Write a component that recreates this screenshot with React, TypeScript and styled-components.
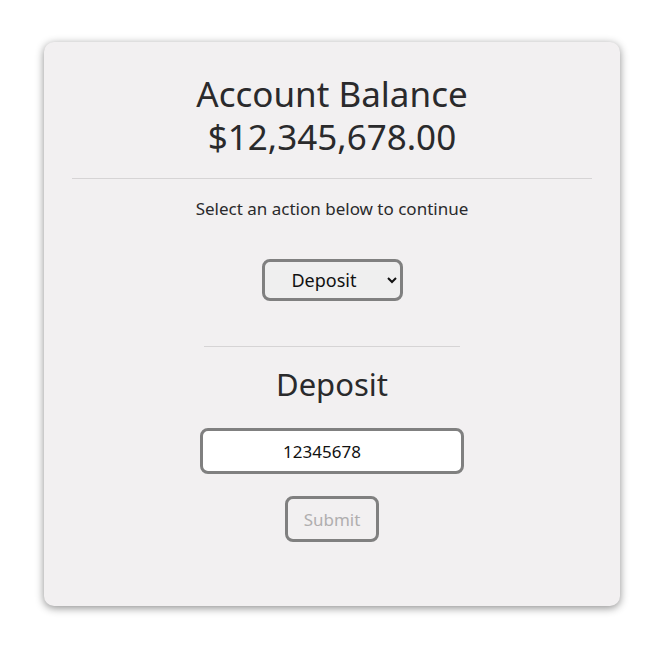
import React, { useState } from "react";
import styled, { createGlobalStyle } from "styled-components";

const Global = createGlobalStyle`
  html, body { margin: 0; padding: 0; background: #ffffff; }
  body { font-family: "Noto Sans", "Open Sans", sans-serif; color: #2a2a2c; }
  * { box-sizing: border-box; }
`;

const Page = styled.div`
  padding: 42px 1px 42px 0;
  display: flex;
  justify-content: center;
`;

const Card = styled.main`
  width: 576px;
  min-height: 564px;
  background: #f2f0f1;
  border-radius: 10px;
  box-shadow: 0 2px 8px rgba(0, 0, 0, 0.45);
  padding: 30px 28px 40px;
  display: flex;
  flex-direction: column;
  align-items: center;
`;

const Title = styled.h1`
  margin: 0;
  font-size: 35px;
  font-weight: 400;
  line-height: 43px;
  text-align: center;
`;

const Rule = styled.hr<{ $width?: number }>`
  border: none;
  border-top: 1px solid #d6d4d5;
  width: ${(p) => (p.$width ? `${p.$width}px` : "100%")};
  margin: ${(p) => (p.$width ? "45px 0 15px" : "20px 0 18px")};
`;

const Prompt = styled.p`
  margin: 0;
  font-size: 17px;
  line-height: 24px;
  text-align: center;
`;

const Select = styled.select`
  margin-top: 38px;
  width: 141px;
  height: 42px;
  border: 3px solid #808080;
  border-radius: 8px;
  background: #efefef;
  font-family: "Noto Sans", sans-serif;
  font-size: 18px;
  color: #111;
  text-align: center;
  padding: 0 4px 0 0;
`;

const SubTitle = styled.h2`
  margin: 0;
  font-size: 31px;
  font-weight: 400;
  line-height: 44px;
  text-align: center;
`;

const Form = styled.form`
  display: flex;
  flex-direction: column;
  align-items: center;
  gap: 22px;
  margin-top: 22px;
`;

const AmountInput = styled.input`
  width: 264px;
  height: 46px;
  border: 3px solid #808080;
  border-radius: 8px;
  background: #ffffff;
  font-family: "Noto Sans", sans-serif;
  font-size: 17px;
  color: #111;
  text-align: center;
  padding: 0 20px 0 0;
  outline: none;
`;

const SubmitButton = styled.button`
  width: 94px;
  height: 46px;
  border: 3px solid #808080;
  border-radius: 8px;
  background: transparent;
  font-family: "Noto Sans", sans-serif;
  font-size: 17px;
  color: #b0aeaf;
`;

export default function App() {
  const [action, setAction] = useState("deposit");
  const [amount, setAmount] = useState("12345678");
  return (
    <>
      <Global />
      <Page>
        <Card>
          <Title>
            Account Balance
            <br />
            $12,345,678.00
          </Title>
          <Rule />
          <Prompt>Select an action below to continue</Prompt>
          <Select value={action} onChange={(e) => setAction(e.target.value)}>
            <option value="deposit">Deposit</option>
            <option value="withdraw">Withdraw</option>
          </Select>
          <Rule $width={256} />
          <SubTitle>Deposit</SubTitle>
          <Form onSubmit={(e) => e.preventDefault()}>
            <AmountInput value={amount} onChange={(e) => setAmount(e.target.value)} />
            <SubmitButton type="submit" disabled>
              Submit
            </SubmitButton>
          </Form>
        </Card>
      </Page>
    </>
  );
}
